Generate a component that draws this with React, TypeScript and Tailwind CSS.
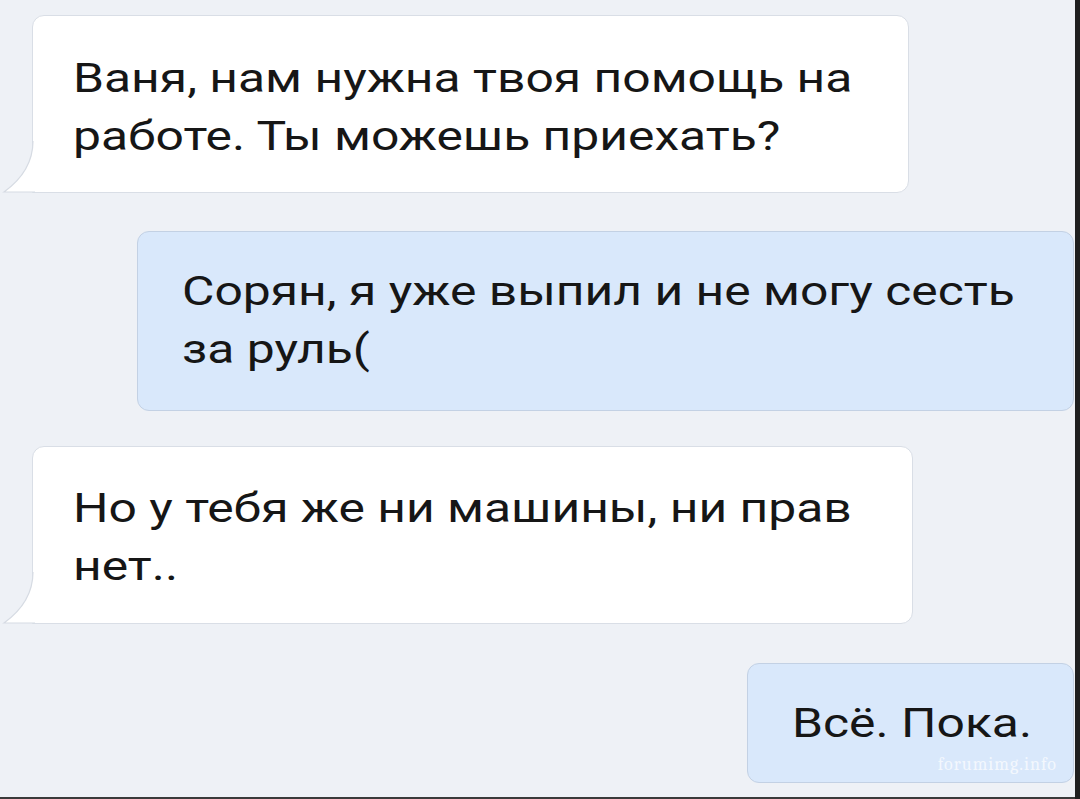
import React from 'react';

function Tail() {
  return (
    <svg
      className="absolute left-[-31px] bottom-[-1px]"
      width="33"
      height="52"
      viewBox="0 0 33 52"
    >
      <path d="M31 0 C31 22 20 38 2 51 L33 51 L33 0 Z" fill="#ffffff" />
      <path d="M31 0 C31 22 20 38 2 51 L33 51" fill="none" stroke="#d6dbe3" strokeWidth="1.2" />
    </svg>
  );
}

function Line({ text }: { text: string }) {
  return <div className="leading-[58px] whitespace-nowrap origin-left scale-x-[1.245]">{text}</div>;
}

function Incoming({ lines, className }: { lines: string[]; className: string }) {
  return (
    <div className={`relative bg-white border border-[#d9dee6] rounded-[12px] rounded-bl-none pl-[40px] ${className}`}>
      {lines.map((l) => (
        <Line key={l} text={l} />
      ))}
      <Tail />
    </div>
  );
}

function Outgoing({ lines, className }: { lines: string[]; className: string }) {
  return (
    <div className={`relative bg-[#d9e8fb] border border-[#c3d1e4] rounded-[12px] pl-[44px] ${className}`}>
      {lines.map((l) => (
        <Line key={l} text={l} />
      ))}
    </div>
  );
}

export default function App() {
  return (
    <div
      className="w-[1080px] h-[799px] overflow-hidden flex bg-[#eef1f6] text-[#161616] text-[40px]"
      style={{ fontFamily: 'Roboto, "Noto Sans", sans-serif' }}
    >
      <div className="flex-1 flex flex-col border-b-[2px] border-[#3a3a3a]">
        <Incoming
          className="ml-[32px] mt-[15px] w-[877px] h-[178px] pt-[34px]"
          lines={['Ваня, нам нужна твоя помощь на', 'работе. Ты можешь приехать?']}
        />
        <Outgoing
          className="ml-[137px] mt-[38px] h-[180px] pt-[31px] mr-[1px]"
          lines={['Сорян, я уже выпил и не могу сесть', 'за руль(']}
        />
        <Incoming
          className="ml-[32px] mt-[35px] w-[881px] h-[178px] pt-[33px]"
          lines={['Но у тебя же ни машины, ни прав', 'нет..']}
        />
        <Outgoing
          className="ml-auto mt-[39px] w-[327px] h-[120px] pt-[31px] mr-[1px]"
          lines={['Всё. Пока.']}
        />
        <div className="relative">
          <span className="absolute right-[18px] top-[-32px] text-[18px] tracking-[1px] text-white/70 font-serif">
            forumimg.info
          </span>
        </div>
      </div>
      <div className="w-[5px] bg-[#1f1f1f]" />
    </div>
  );
}
